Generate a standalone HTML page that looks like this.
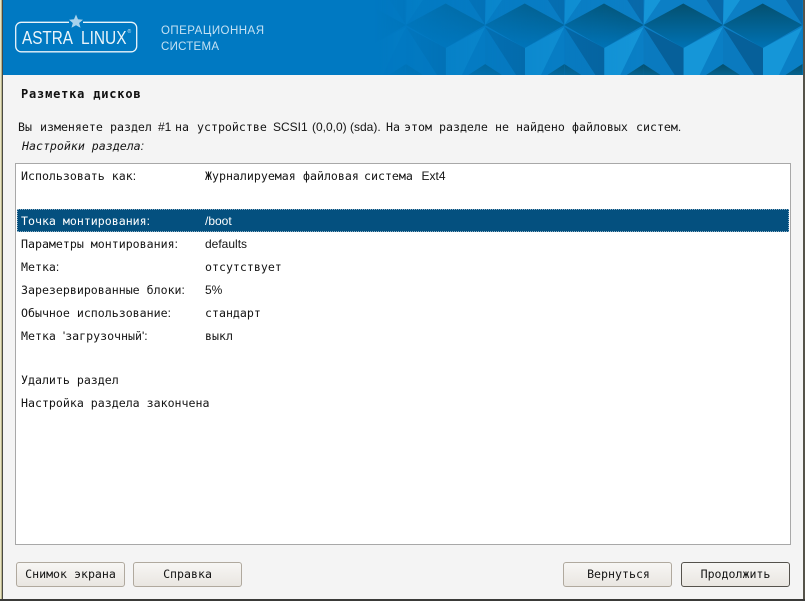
<!DOCTYPE html>
<html><head><meta charset="utf-8">
<style>
html,body{margin:0;padding:0;background:#f4f4f4;}
#p{position:relative;width:805px;height:601px;overflow:hidden;background:#f4f4f4;font-family:"DejaVu Sans Mono","Liberation Mono",monospace;font-size:11.6px;color:#141414;}
#p span,#p div.t{position:absolute;white-space:pre;line-height:16px;}
.l{font-family:"Liberation Sans",sans-serif;font-size:12px;}
i{font-family:"Liberation Sans",sans-serif;font-style:normal;font-size:12px;}
.b{position:absolute;box-sizing:border-box;height:25px;top:562px;border:1px solid #b0a99e;border-radius:3px;background:linear-gradient(#f7f6f4,#e9e6e1);text-align:center;line-height:23px;color:#141414;}
</style></head><body>
<div id="p">
<div style="position:absolute;left:0;top:0;width:3px;height:601px;background:#b9b48c"></div>
<div style="position:absolute;left:0;top:0;width:1px;height:601px;background:#e8e4c4"></div>
<div style="position:absolute;left:2px;top:0;width:1px;height:601px;background:#4a4a44"></div>
<div style="position:absolute;left:803px;top:0;width:2px;height:601px;background:#55534a"></div>
<div style="position:absolute;left:0;top:599px;width:805px;height:2px;background:#3a3a38"></div>
<svg style="position:absolute;left:3px;top:0" width="800" height="75" viewBox="3 0 800 75">
<defs>
<linearGradient id="dg" x1="0" y1="0" x2="0" y2="1"><stop offset="0" stop-color="#04506f"/><stop offset="1" stop-color="#0072b4"/></linearGradient>
<linearGradient id="ag" x1="0" y1="0" x2="0" y2="1"><stop offset="0" stop-color="#044f6e"/><stop offset="1" stop-color="#05628f"/></linearGradient>
<linearGradient id="fade" gradientUnits="userSpaceOnUse" x1="375" y1="0" x2="650" y2="0"><stop offset="0" stop-color="#000"/><stop offset="0.3" stop-color="#505050"/><stop offset="1" stop-color="#fff"/></linearGradient>
<mask id="m" maskUnits="userSpaceOnUse" x="0" y="0" width="805" height="75"><rect x="0" y="0" width="805" height="75" fill="url(#fade)"/></mask>
<g id="tile">
<rect x="0" y="0" width="79.4" height="75" fill="#0c7fc5"/>
<polygon points="0,25 1,0 17,0" fill="#1596d8"/>
<polygon points="79.4,25 63,0 79.4,0" fill="#0868a8"/>
<polygon points="0,27 40,48 40,75 31,75" fill="#06609a"/>
<polygon points="0,27 31,75 0,75" fill="#0a7abf"/>
<polygon points="79.4,27 56,75 79.4,75" fill="#0a7fc5"/>
<polygon points="40,48 79.4,27 56,75 40,75" fill="#1596d8"/>
<polygon points="0,64 17,75 0,75" fill="url(#ag)"/>
<polygon points="79.4,64 79.4,75 62.4,75" fill="url(#ag)"/>
<polygon points="0,25 39.7,3.5 79.4,25 39.7,48" fill="url(#dg)"/>
</g>
</defs>
<rect x="3" y="0" width="800" height="75" fill="#0079c2"/>
<g mask="url(#m)">
<use href="#tile" x="326.5"/>
<use href="#tile" x="405.9"/>
<use href="#tile" x="485"/>
<use href="#tile" x="564.3"/>
<use href="#tile" x="643.6"/>
<use href="#tile" x="723"/>
</g>
<rect x="15.700" y="22.300" width="121" height="29.500" rx="5.5" fill="none" stroke="#fff" stroke-width="1.3" opacity=".92"/>
<rect x="69" y="20" width="14" height="5" fill="#0079c2"/>
<polygon points="76,14.5 78,19.3 83,19.700 79.2,23 80.5,27.8 76,25.2 71.5,27.8 72.8,23 69,19.7 74,19.3" fill="#a9d2ec"/>
<text x="22" y="44" font-family="Liberation Sans,sans-serif" font-size="18" fill="#eaf4fa" textLength="51" lengthAdjust="spacingAndGlyphs">ASTRA</text>
<text x="81" y="44" font-family="Liberation Sans,sans-serif" font-size="18" fill="#eaf4fa" textLength="45.500" lengthAdjust="spacingAndGlyphs">LINUX</text>
<text x="127.500" y="33" font-family="Liberation Sans,sans-serif" font-size="5" fill="#d5e9f5">®</text>
<text x="161" y="34" font-family="Liberation Sans,sans-serif" font-size="11.5" fill="#c4e1f3" textLength="103" lengthAdjust="spacing">ОПЕРАЦИОННАЯ</text>
<text x="161" y="50" font-family="Liberation Sans,sans-serif" font-size="11.5" fill="#c4e1f3" textLength="58" lengthAdjust="spacing">СИСТЕМА</text>
</svg>

<span style="left:21px;top:86px;font-weight:bold;font-size:12px;letter-spacing:.8px;color:#111">Разметка дисков</span>

<span style="left:18px;top:119px">Вы</span>
<span style="left:40px;top:119px">изменяете</span>
<span style="left:110px;top:119px">раздел</span>
<span style="left:158px;top:119px" class="l">#1</span>
<span style="left:175px;top:119px">на</span>
<span style="left:197px;top:119px">устройстве</span>
<span style="left:273px;top:119px" class="l">SCSI1</span>
<span style="left:312px;top:119px" class="l">(0,0,0)</span>
<span style="left:350px;top:119px" class="l">(sda).</span>
<span style="left:386px;top:119px">На</span>
<span style="left:404px;top:119px">этом</span>
<span style="left:439px;top:119px">разделе</span>
<span style="left:495px;top:119px">не</span>
<span style="left:516px;top:119px">найдено</span>
<span style="left:572px;top:119px">файловых</span>
<span style="left:636px;top:119px">систем<i>.</i></span>

<span style="left:22px;top:138px;font-style:italic">Настройки раздела<i style="font-style:italic">:</i></span>

<div style="position:absolute;box-sizing:border-box;left:15px;top:163px;width:776px;height:382px;background:#fff;border:1px solid #a8a8a8"></div>
<div style="position:absolute;box-sizing:border-box;left:17px;top:209px;width:772px;height:23px;background:#04507f;border:1px dotted #8fb0c6"></div>

<span style="left:21px;top:168px">Использовать как<i>:</i></span>
<span style="left:205px;top:168px">Журналируемая</span>
<span style="left:303px;top:168px">файловая</span>
<span style="left:364px;top:168px">система</span>
<span style="left:421.5px;top:168px" class="l">Ext4</span>

<span style="left:21px;top:213px;color:#fff">Точка монтирования<i>:</i></span>
<span style="left:205px;top:213px;color:#fff" class="l">/boot</span>
<span style="left:21px;top:236px">Параметры монтирования<i>:</i></span>
<span style="left:205px;top:236px" class="l">defaults</span>
<span style="left:21px;top:259px">Метка<i>:</i></span>
<span style="left:205px;top:259px">отсутствует</span>
<span style="left:21px;top:282px">Зарезервированные блоки<i>:</i></span>
<span style="left:205px;top:282px" class="l">5%</span>
<span style="left:21px;top:305px">Обычное использование<i>:</i></span>
<span style="left:205px;top:305px">стандарт</span>
<span style="left:21px;top:328px">Метка <i>'</i>загрузочный<i>':</i></span>
<span style="left:205px;top:328px">выкл</span>
<span style="left:21px;top:372px">Удалить раздел</span>
<span style="left:21px;top:395px">Настройка раздела закончена</span>

<div class="b" style="left:16px;width:109px">Снимок экрана</div>
<div class="b" style="left:133px;width:109px">Справка</div>
<div class="b" style="left:563px;width:109px;padding-left:2px">Вернуться</div>
<div class="b" style="left:681px;width:109px;border-color:#55524c">Продолжить</div>
</div>
</body></html>
